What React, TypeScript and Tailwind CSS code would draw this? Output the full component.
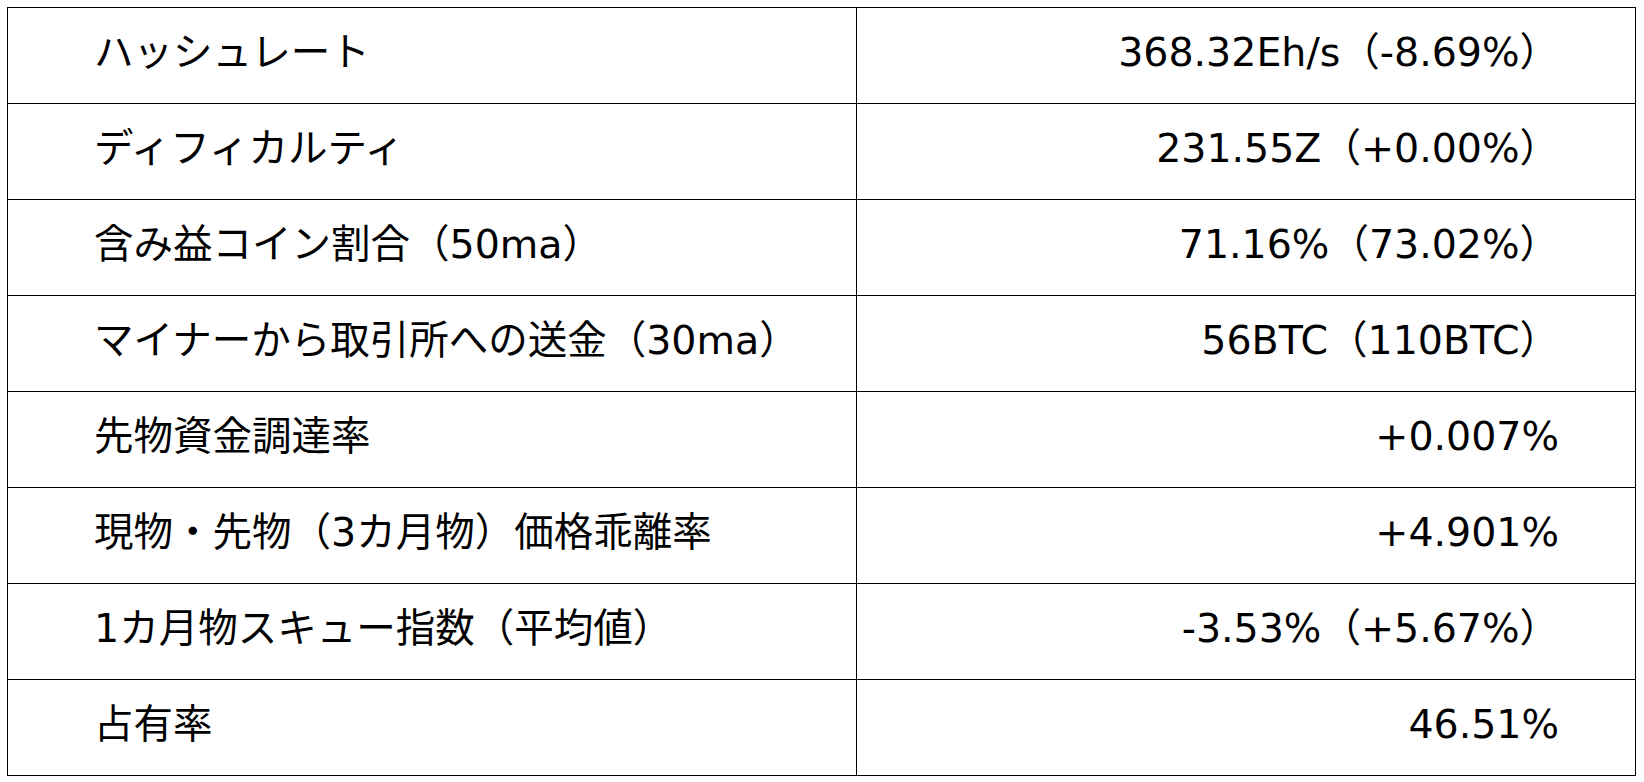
import React from 'react';

interface Row {
  label: string;
  value: string;
}

const rows: Row[] = [
  { label: 'ハッシュレート', value: '368.32Eh/s（-8.69%）' },
  { label: 'ディフィカルティ', value: '231.55Z（+0.00%）' },
  { label: '含み益コイン割合（50ma）', value: '71.16%（73.02%）' },
  { label: 'マイナーから取引所への送金（30ma）', value: '56BTC（110BTC）' },
  { label: '先物資金調達率', value: '+0.007%' },
  { label: '現物・先物（3カ月物）価格乖離率', value: '+4.901%' },
  { label: '1カ月物スキュー指数（平均値）', value: '-3.53%（+5.67%）' },
  { label: '占有率', value: '46.51%' },
];

const App: React.FC = () => {
  return (
    <div className="min-h-screen bg-white pt-[7px] pl-[7px] font-['DejaVu_Sans','Noto_Sans_CJK_JP',sans-serif] text-black">
      <table className="w-[1629px] border-collapse border border-black text-[39.5px] leading-none">
        <tbody>
          {rows.map((row) => (
            <tr key={row.label} className="h-[96px]">
              <td className="w-[849px] border border-black pb-[6px] pl-[86px] align-middle">{row.label}</td>
              <td className="border border-black pb-[6px] pr-[76px] text-right align-middle">{row.value}</td>
            </tr>
          ))}
        </tbody>
      </table>
    </div>
  );
};

export default App;
